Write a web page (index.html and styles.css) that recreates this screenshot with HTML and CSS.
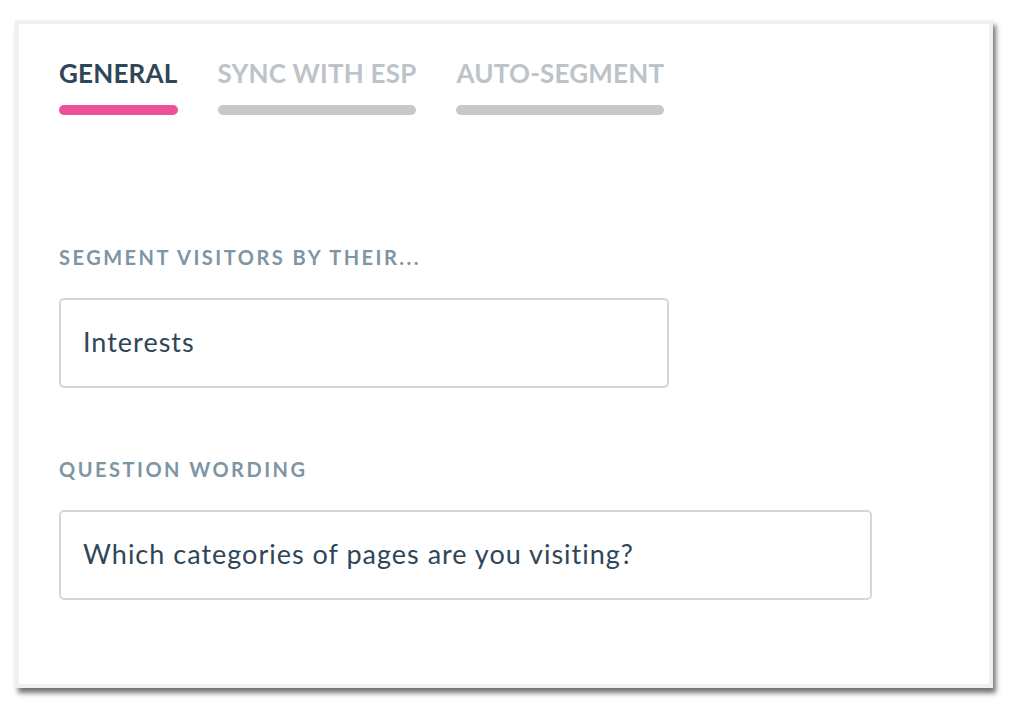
FILE: index.html
```html
<!DOCTYPE html>
<html>
<head>
<meta charset="utf-8">
<link rel="stylesheet" href="styles.css">
</head>
<body>
<div class="card">
  <div class="tabs">
    <div class="tab active"><span class="tab-label">GENERAL</span><span class="tab-bar"></span></div>
    <div class="tab"><span class="tab-label">SYNC WITH ESP</span><span class="tab-bar"></span></div>
    <div class="tab"><span class="tab-label">AUTO-SEGMENT</span><span class="tab-bar"></span></div>
  </div>
  <div class="field first">
    <div class="label">SEGMENT VISITORS BY THEIR...</div>
    <div class="input short">Interests</div>
  </div>
  <div class="field second">
    <div class="label">QUESTION WORDING</div>
    <div class="input long">Which categories of pages are you visiting?</div>
  </div>
</div>
</body>
</html>
```
FILE: styles.css
```css
html, body {
  margin: 0;
  padding: 0;
  background: #ffffff;
}
body {
  font-family: Lato, "Noto Sans", sans-serif;
  padding: 20px 0 26px 15px;
}
.card {
  box-sizing: border-box;
  width: 978px;
  height: 668px;
  background: #ffffff;
  border: 4px solid #eef1ef;
  box-shadow: 3px 5px 5px rgba(0, 0, 0, 0.55);
  padding: 32px 40px 0 40px;
}
.tabs {
  display: flex;
  gap: 40px;
}
.tab {
  display: flex;
  flex-direction: column;
  align-items: stretch;
}
.tab-label {
  font-size: 26px;
  font-weight: 700;
  line-height: 34px;
  color: #bcc3c9;
  letter-spacing: 0.2px;
}
.tab.active .tab-label {
  color: #2f4658;
}
.tab-bar {
  display: block;
  height: 10px;
  border-radius: 5px;
  background: #c5c9cc;
  margin-top: 15px;
}
.tab.active .tab-bar {
  background: #ec509b;
}
.field {
  display: flex;
  flex-direction: column;
  align-items: flex-start;
}
.field.first {
  margin-top: 130px;
}
.field.second {
  margin-top: 69px;
}
.label {
  font-size: 20px;
  font-weight: 700;
  line-height: 24px;
  letter-spacing: 2.5px;
  color: #7e95a4;
}
.input {
  box-sizing: border-box;
  margin-top: 29px;
  height: 90px;
  border: 2px solid #d3d6df;
  border-radius: 5px;
  padding: 0 22px 3px 22px;
  display: flex;
  align-items: center;
  font-size: 27px;
  letter-spacing: 1px;
  color: #2f4658;
}
.input.short {
  width: 610px;
}
.input.long {
  width: 813px;
}
```
